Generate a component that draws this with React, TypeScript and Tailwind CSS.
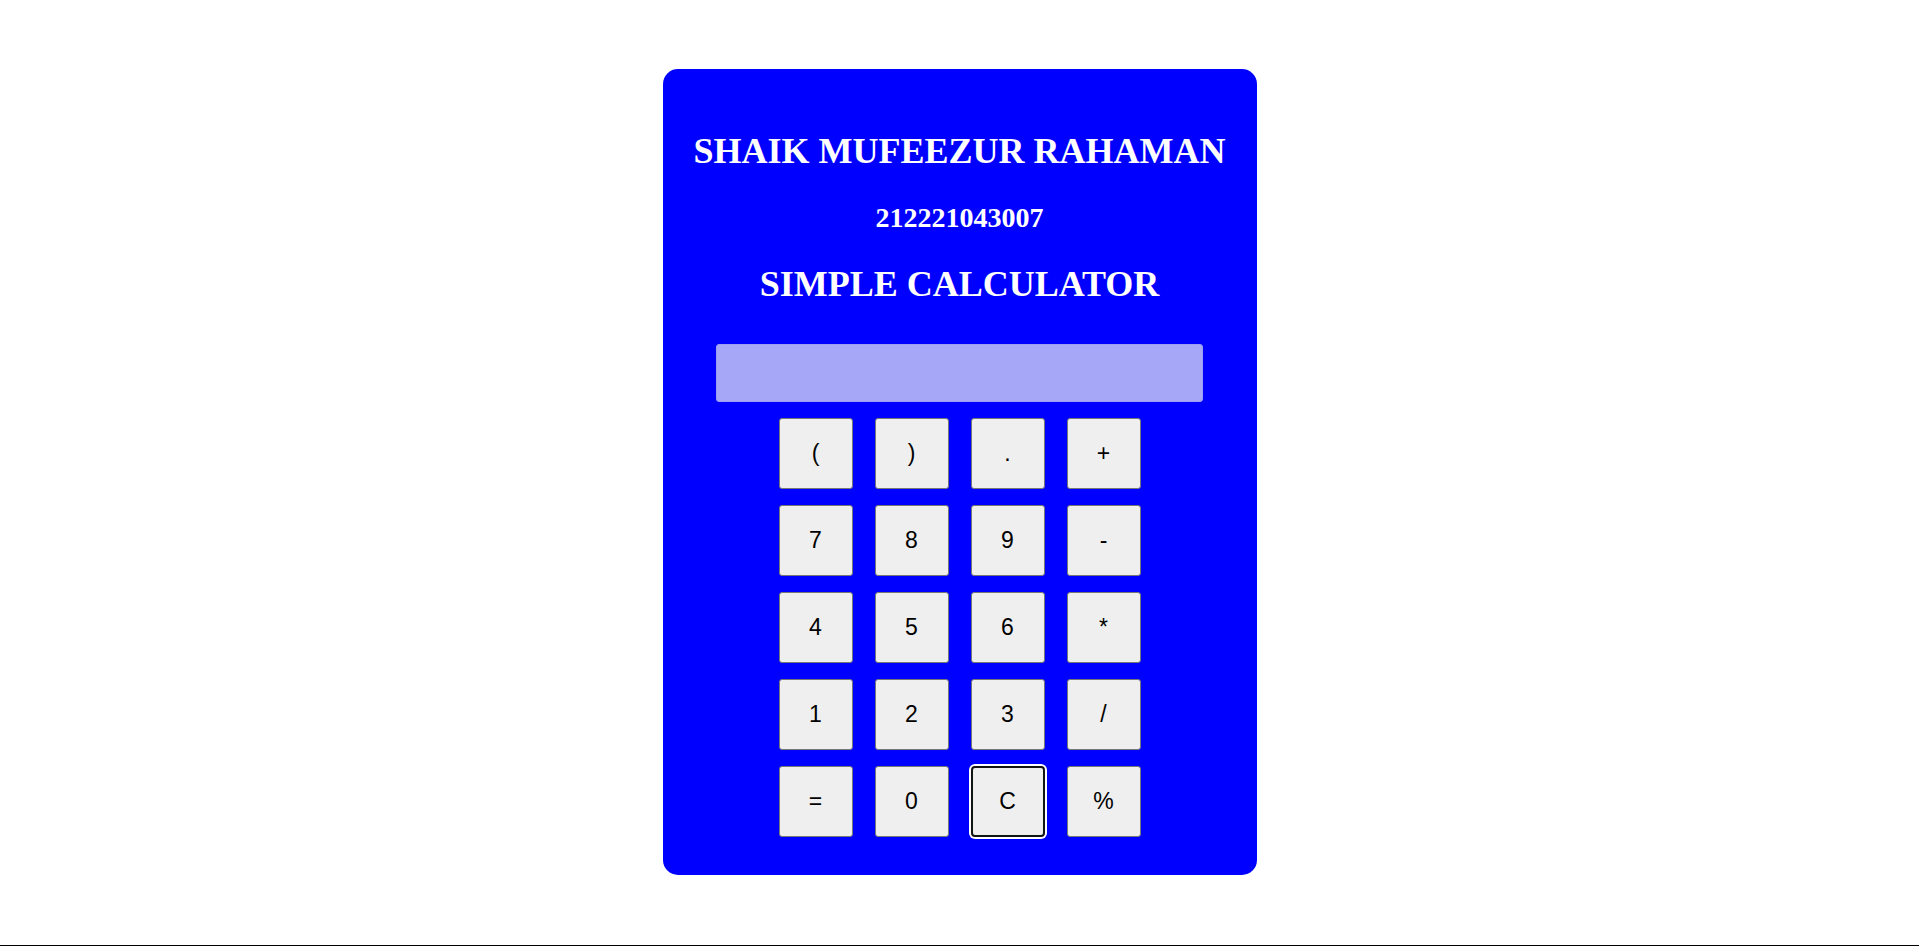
import React, { useState } from 'react';

const rows: string[][] = [
  ['(', ')', '.', '+'],
  ['7', '8', '9', '-'],
  ['4', '5', '6', '*'],
  ['1', '2', '3', '/'],
  ['=', '0', 'C', '%'],
];

export default function App() {
  const [expr, setExpr] = useState('');

  const press = (key: string) => {
    if (key === 'C') return setExpr('');
    if (key === '=') {
      try {
        // eslint-disable-next-line no-new-func
        const result = Function(`"use strict"; return (${expr || '0'})`)();
        setExpr(String(result));
      } catch {
        setExpr('Error');
      }
      return;
    }
    setExpr((prev) => prev + key);
  };

  return (
    <div className="h-[946px] box-border border-b border-black bg-white pt-[69px]">
      <div className="mx-auto w-[594px] rounded-[15px] bg-[#0000ff] pt-[62px] pb-[38px] flex flex-col items-center font-['Liberation_Serif','Times_New_Roman',serif] text-white">
        <h1 className="text-[36px] leading-[40px] font-bold">SHAIK MUFEEZUR RAHAMAN</h1>
        <h2 className="mt-[31px] text-[28px] leading-[32px] font-bold">212221043007</h2>
        <h1 className="mt-[30px] text-[36px] leading-[40px] font-bold">SIMPLE CALCULATOR</h1>

        <div className="mt-[40px] w-[487px] h-[58px] rounded-[3px] border border-[#9d9df2] bg-[#a6a7f7] px-3 flex items-center justify-end text-[24px] text-black font-['Liberation_Sans',Arial,sans-serif]">
          {expr}
        </div>

        <div className="mt-[16px] grid grid-cols-[repeat(4,74px)] gap-x-[22px] gap-y-[16px]">
          {rows.flat().map((key) => (
            <button
              key={key}
              onClick={() => press(key)}
              className={
                key === 'C'
                  ? "h-[71px] w-[74px] rounded-[4px] border-2 border-[#141414] bg-[#efefef] text-[23px] text-black ring-2 ring-white font-['Liberation_Sans',Arial,sans-serif]"
                  : "h-[71px] w-[74px] rounded-[3px] border border-[#767676] bg-[#efefef] text-[23px] text-black font-['Liberation_Sans',Arial,sans-serif]"
              }
            >
              {key}
            </button>
          ))}
        </div>
      </div>
    </div>
  );
}
